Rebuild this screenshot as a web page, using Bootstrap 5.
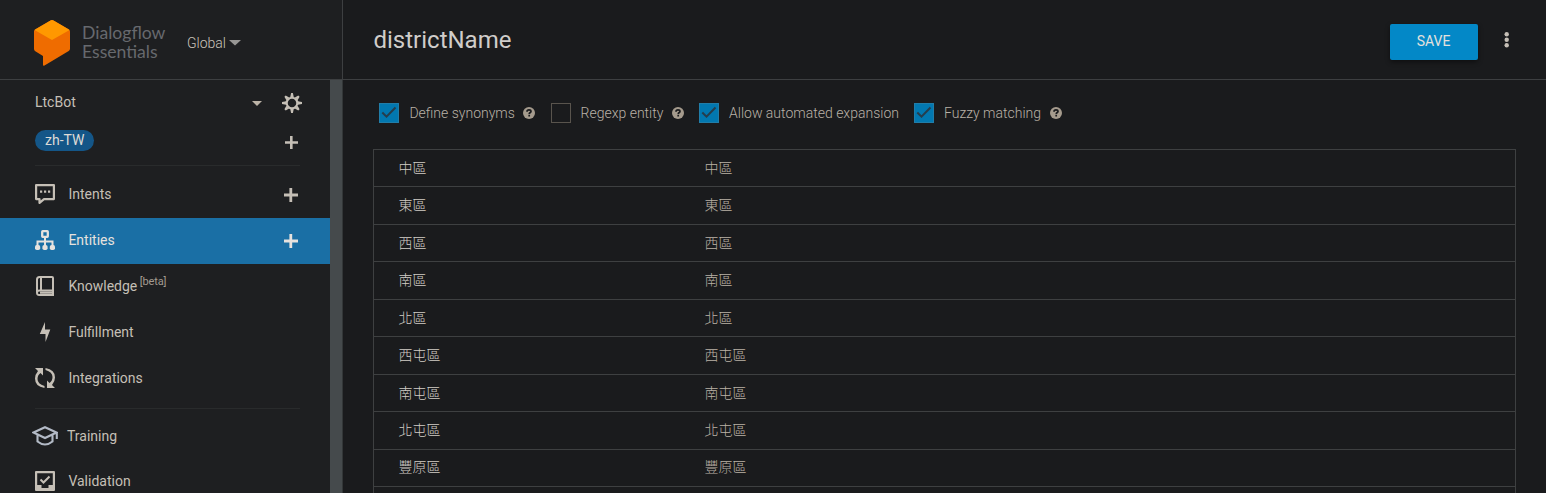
<!DOCTYPE html>
<html lang="zh-TW" data-bs-theme="dark">
<head>
<meta charset="utf-8">
<title>Dialogflow Essentials</title>
<link href="https://cdn.jsdelivr.net/npm/bootstrap@5.3.0/dist/css/bootstrap.min.css" rel="stylesheet">
<style>
body{font:400 14px/20px Roboto,"Noto Sans CJK TC",sans-serif;background:#1a1b1d;color:#c5bfb6}
svg{display:block;flex:none}
.page{height:493px}
.side{width:343px;flex:none;background:#1e1f21}
.brandbar{height:80px;flex:none;border-bottom:1px solid #3d3f41;border-right:1px solid #3d3f41;padding:0 0 0 33px}
.logotext{font:400 17.6px/19px Lato,sans-serif;color:#67696e;margin:4px 0 0 11px;width:83px}
.region{font-weight:300;margin:6px 0 0 22px;color:#cbc4bb}
.menu{width:330px;flex:none}
.scrolltrack{width:13px;background:#454a4c;border-right:1px solid #333738}
.agent{height:44px;padding:0 28.5px 0 35px}
.lang{height:41px;padding:0 32px 0 35px}
.langpill{background:#145688;color:#dedbd7;border-radius:11px;height:21px;line-height:21px;padding:0 10px;margin-top:6px}
.rule{height:1px;background:#292b2c;margin:0 30px 0 35px}
.item{height:46px;padding:0 32.5px 2px 35px;color:#c5bfb6;text-decoration:none}
.item span{margin-left:13.4px}
.item .plus{margin-left:auto;margin-top:2px}
.item.current{background:#1a6fa5;color:#e6e2de}
.item sup{font-size:11px;color:#a39b90;top:-6px;margin-left:2.5px;line-height:0;letter-spacing:-.15px}
.main-head{height:80px;border-bottom:1px solid #3d3f41;padding:0 34px 0 30.5px}
.title{font:400 24px/32px Roboto,sans-serif;color:#d0cdca}
.save{background:#0388c7;border:0;border-radius:2px;width:88px;height:36px;color:#e4e1dd;font-size:14px;line-height:20px;padding:0 1px 2px 0;margin-top:4px;box-shadow:0 2px 5px #0007}
.opts{height:69px;padding:0 0 3px 36px;font-weight:300;color:#b9b1a6}
.box{width:20px;height:20px;border:1px solid #59544d}
.box.on{background:#0278b0;border-color:#217da8}
.opt span{margin:0 8.5px 0 10px}
.entries{margin:0 30px 0 30px;border:1px solid #3e4041;border-bottom:0}
.entry{height:37.45px;border-bottom:1px solid #3e4041;padding:0 0 .6px 24.5px}
.entry>:first-child{width:306px;color:#d2cdc6;font-weight:300}
.entry>:last-child{color:#bab2a6;font-weight:300}
</style>
</head>
<body>
<svg width="0" height="0" class="position-absolute">
<symbol id="plus" viewBox="0 0 14 14"><path d="M6.800 0v14M0 7h14" stroke="currentColor" stroke-width="2.800"/></symbol>
<symbol id="help" viewBox="0 0 12 12"><circle cx="6" cy="6" r="6" fill="#a59b8d"/><path d="M4 4.700C4 3.200 5 2.800 6 2.800s2 .5 2 1.600C8 5.600 6.200 5.500 6.200 7.200M6.200 8v1.600" fill="none" stroke="#1a1b1d" stroke-width="1.700"/></symbol>
<symbol id="tick" viewBox="0 0 18 18"><path d="M2.300 8.500l4.200 4.200L15.500 3.500" fill="none" stroke="#263d4c" stroke-width="2"/></symbol>
</svg>
<div class="page d-flex overflow-hidden">
<aside class="side d-flex flex-column">
  <div class="brandbar d-flex align-items-center">
    <svg width="38" height="48" viewBox="0 0 38 48" style="margin-top:7px"><path d="M1 12.500Q1 11 2.300 10.200L17.500 1.400q1.500-.8 3 0l15.200 8.800Q37 11 37 12.500v17.200q0 1.600-1.300 2.300L11.500 46.600q-1.500.8-1.500-.8V37L2.300 32.300Q1 31.500 1 30z" fill="#ef6c00"/><path d="M1.500 11L17.500 1.400q1.500-.8 3 0L36.600 11 19 21z" fill="#ff9800"/></svg>
    <div class="logotext">Dialogflow<br>Essentials</div>
    <div class="region d-flex align-items-center">Global<svg width="12" height="6" style="margin-left:3px"><path d="M0 0h12L6 5.500z" fill="#979694"/></svg></div>
  </div>
  <div class="d-flex flex-fill">
    <nav class="menu">
      <div class="agent d-flex align-items-center"><div>LtcBot</div>
        <svg class="ms-auto" width="10" height="5" style="margin-top:3px"><path d="M0 0h10L5 5z" fill="#bcb3a7"/></svg>
        <svg width="20" height="20" viewBox="-10 -10 20 20" style="margin-left:20px;margin-top:2px"><circle r="5.300" fill="none" stroke="#c5bfb6" stroke-width="2.100"/><path d="M-.9-10h1.800L1.800-5.800h-3.600zM-.9 10h1.800L1.800 5.800h-3.600zM-10-.9v1.800L-5.800 1.800v-3.600zM10-.9v1.800L5.800 1.800v-3.600zM-7.600-6.300l1.300-1.300 3.500 2-2.800 2.800zM7.600-6.300L6.300-7.600l-3.500 2 2.800 2.800zM-7.600 6.300l1.300 1.300 3.500-2-2.800-2.800zM7.600 6.300L6.300 7.600l-3.500-2 2.800-2.800z" fill="#c5bfb6"/></svg>
      </div>
      <div class="lang d-flex align-items-start"><div class="langpill">zh-TW</div><svg class="ms-auto" width="13" height="13" style="margin-top:12px"><use href="#plus"/></svg></div>
      <div class="rule"></div><div style="height:6px"></div>
      <a class="item d-flex align-items-center"><svg width="20" height="20" viewBox="0 0 20 20"><path d="M1.100 1.100h17.800v14H9L4.500 18.900v-3.800H1.100z" fill="none" stroke="currentColor" stroke-width="2.200" stroke-linejoin="round"/><path d="M5 6.500h2.200v2.200H5zm4 0h2.200v2.200H9zm4 0h2.200v2.200h-2.200z" fill="currentColor"/></svg><span>Intents</span><svg class="plus" width="14" height="14"><use href="#plus"/></svg></a>
      <a class="item current d-flex align-items-center"><svg width="20" height="20" viewBox="0 0 20 20"><rect x="7.200" y="1.200" width="5.600" height="5.600" rx=".5" fill="none" stroke="currentColor" stroke-width="2.300"/><path d="M10 7v9M2.500 17v-5.500h15V17" fill="none" stroke="currentColor" stroke-width="2"/><g fill="currentColor"><rect y="15" width="5.200" height="5" rx="1.800"/><rect x="7.400" y="15" width="5.200" height="5" rx="1.800"/><rect x="14.800" y="15" width="5.200" height="5" rx="1.800"/></g></svg><span>Entities</span><svg class="plus" width="14" height="14"><use href="#plus"/></svg></a>
      <a class="item d-flex align-items-center"><svg width="20" height="20" viewBox="0 0 20 20"><path d="M2 16.500V3.500Q2 1 4.500 1H17q1 0 1 1v12.500H4.500Q2 14.500 2 16.800T4.500 19H18v-4.500M6 1v13.500M5 16.800h13" fill="none" stroke="currentColor" stroke-width="2"/></svg><span>Knowledge<sup>[beta]</sup></span></a>
      <a class="item d-flex align-items-center"><svg width="20" height="20" viewBox="0 0 20 20"><path d="M10 0v7.500h5.300L10.500 20v-8H4.800z" fill="currentColor"/></svg><span>Fulfillment</span></a>
      <a class="item d-flex align-items-center"><svg width="20" height="20" viewBox="0 0 20 20"><path d="M0 0h8v7.500L5.500 5Q2.500 7.200 2.500 11q0 5 7 7v2Q0 18.500 0 10.500 0 6.500 3 3zM20 20h-8v-7.500l2.500 2.500Q17.500 12.800 17.500 9q0-5-7-7V0Q20 1.500 20 9.500q0 4-3 7.500z" fill="currentColor"/></svg><span>Integrations</span></a>
      <div style="height:6px"></div><div class="rule"></div><div style="height:5px"></div>
      <a class="item d-flex align-items-center" style="padding-left:32px"><svg width="26" height="20" viewBox="0 0 26 20"><path d="M1.500 6.500L13 1.200l11.500 5.300L13 12zM5.500 9v6.500q7.500 6 15 0V9M24.800 6.500V13" fill="none" stroke="#b3bac6" stroke-width="2.100"/></svg><span style="margin-left:9px">Training</span></a>
      <a class="item d-flex align-items-center" style="height:44px"><svg width="20" height="20" viewBox="0 0 20 20"><path fill-rule="evenodd" d="M1 0h18q1 0 1 1v18q0 1-1 1H1q-1 0-1-1V1q0-1 1-1zm1.200 2.200V14h4.300v3h7v-3h4.300V2.200z" fill="currentColor"/><path d="M5.500 8.500l3 3 6-6" fill="none" stroke="currentColor" stroke-width="2"/></svg><span>Validation</span></a>
    </nav>
    <div class="scrolltrack"></div>
  </div>
</aside>
<main class="flex-fill">
  <header class="main-head d-flex align-items-center">
    <h1 class="title mb-0">districtName</h1>
    <button class="save btn ms-auto">SAVE</button>
    <svg width="10" height="16" viewBox="0 0 10 16" style="margin-left:24px"><g fill="#c5bfb6"><circle cx="4.700" cy="2.200" r="2.200"/><circle cx="4.700" cy="7.700" r="2.200"/><circle cx="4.700" cy="13.300" r="2.200"/></g></svg>
  </header>
  <div class="opts d-flex align-items-center">
    <div class="opt d-flex align-items-center" style="width:172px"><div class="box on"><svg width="18" height="18"><use href="#tick"/></svg></div><span style="margin-left:10.400px">Define synonyms</span><svg width="12" height="12"><use href="#help"/></svg></div>
    <div class="opt d-flex align-items-center" style="width:148px"><div class="box"></div><span style="margin:0 8.500px 0 9.500px">Regexp entity</span><svg width="12" height="12"><use href="#help"/></svg></div>
    <div class="opt d-flex align-items-center" style="width:215px"><div class="box on"><svg width="18" height="18"><use href="#tick"/></svg></div><span>Allow automated expansion</span></div>
    <div class="opt d-flex align-items-center"><div class="box on"><svg width="18" height="18"><use href="#tick"/></svg></div><span>Fuzzy matching</span><svg width="12" height="12"><use href="#help"/></svg></div>
  </div>
  <div class="entries">
    <div class="entry d-flex align-items-center"><div>中區</div><div>中區</div></div>
    <div class="entry d-flex align-items-center"><div>東區</div><div>東區</div></div>
    <div class="entry d-flex align-items-center"><div>西區</div><div>西區</div></div>
    <div class="entry d-flex align-items-center"><div>南區</div><div>南區</div></div>
    <div class="entry d-flex align-items-center"><div>北區</div><div>北區</div></div>
    <div class="entry d-flex align-items-center"><div>西屯區</div><div>西屯區</div></div>
    <div class="entry d-flex align-items-center"><div>南屯區</div><div>南屯區</div></div>
    <div class="entry d-flex align-items-center"><div>北屯區</div><div>北屯區</div></div>
    <div class="entry d-flex align-items-center"><div>豐原區</div><div>豐原區</div></div>
    <div class="entry"></div>
  </div>
</main>
</div>
<script src="https://cdn.jsdelivr.net/npm/bootstrap@5.3.0/dist/js/bootstrap.bundle.min.js"></script>
</body>
</html>
